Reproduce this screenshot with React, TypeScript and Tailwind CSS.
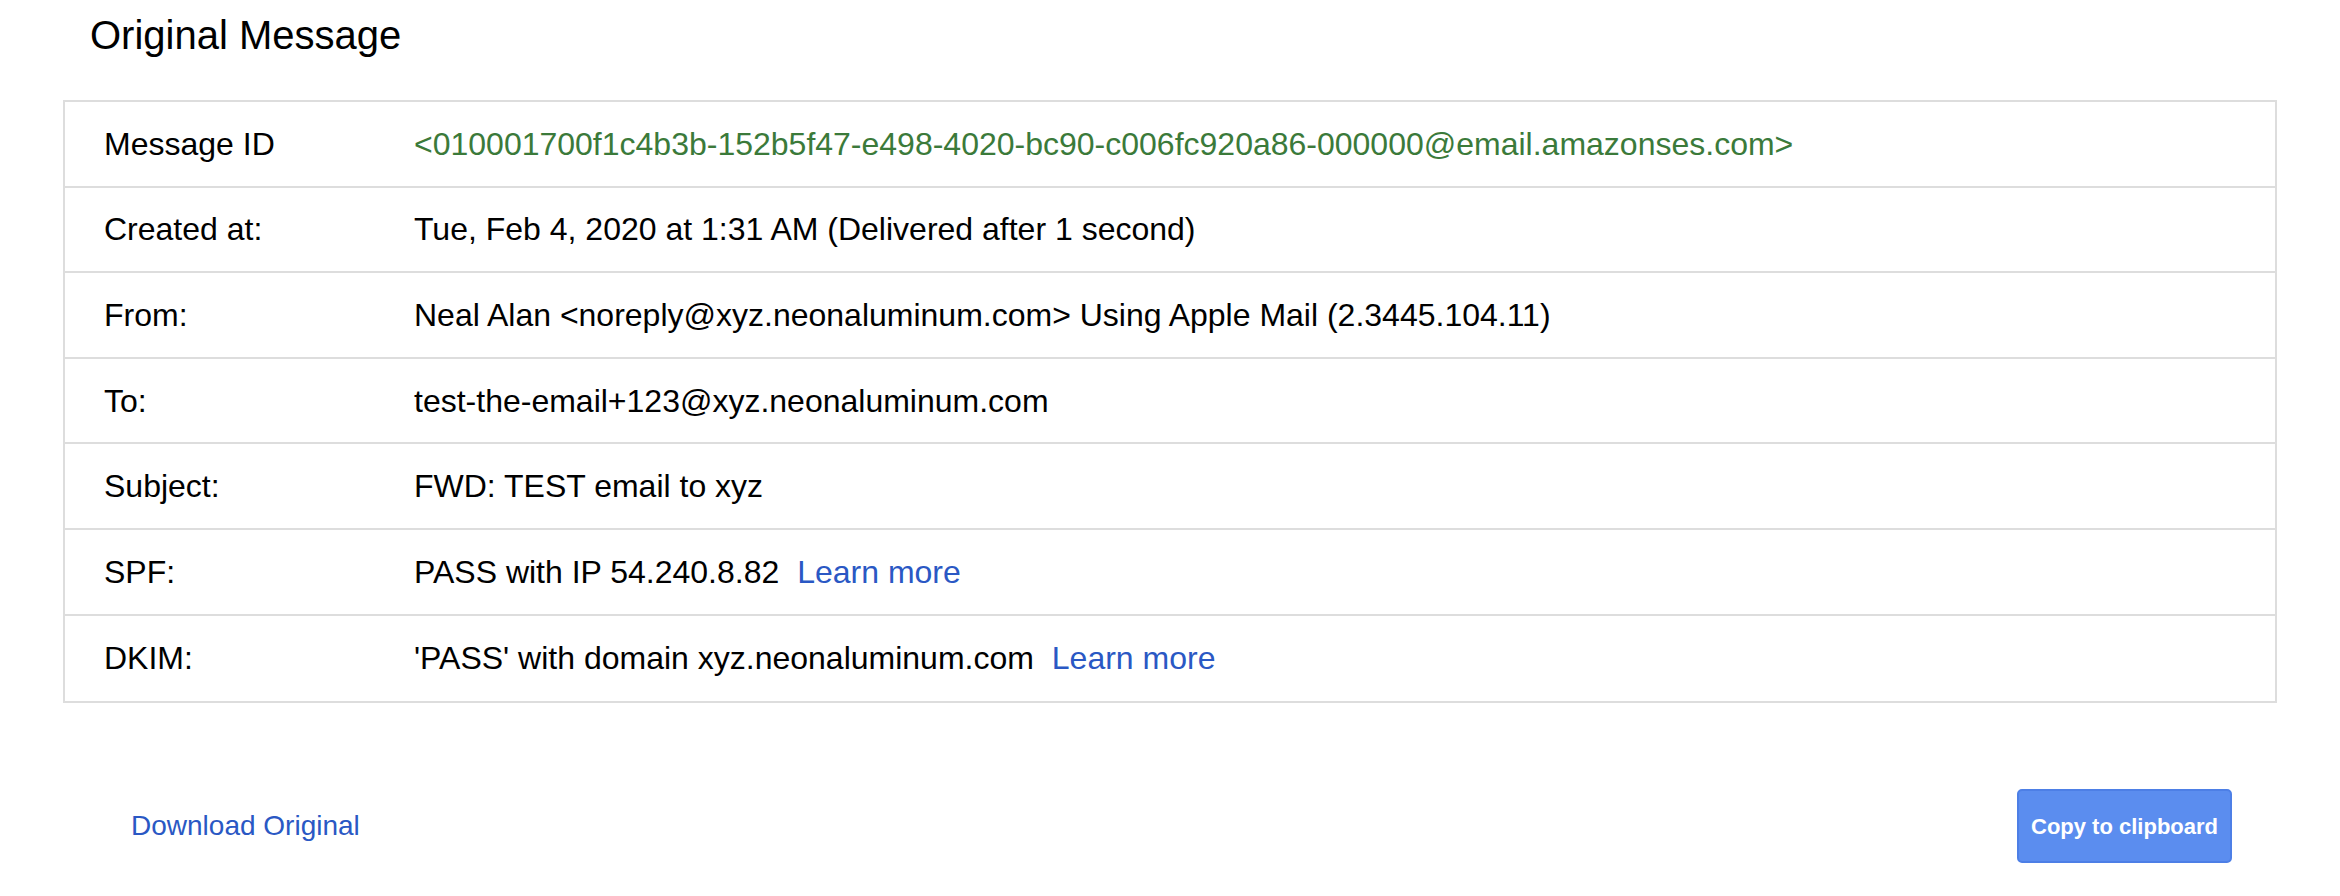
import React from "react";

const font = { fontFamily: '"Liberation Sans", Arial, Helvetica, sans-serif' };

type Row = { label: string; value: React.ReactNode };

const rows: Row[] = [
  {
    label: "Message ID",
    value: (
      <span className="text-[#3b7a3a]">
        {"<010001700f1c4b3b-152b5f47-e498-4020-bc90-c006fc920a86-000000@email.amazonses.com>"}
      </span>
    ),
  },
  { label: "Created at:", value: "Tue, Feb 4, 2020 at 1:31 AM (Delivered after 1 second)" },
  { label: "From:", value: "Neal Alan <noreply@xyz.neonaluminum.com> Using Apple Mail (2.3445.104.11)" },
  { label: "To:", value: "test-the-email+123@xyz.neonaluminum.com" },
  { label: "Subject:", value: "FWD: TEST email to xyz" },
  {
    label: "SPF:",
    value: (
      <>
        PASS with IP 54.240.8.82{" "}
        <a href="#" className="ml-[9px] text-[#2a58c4]">Learn more</a>
      </>
    ),
  },
  {
    label: "DKIM:",
    value: (
      <>
        'PASS' with domain xyz.neonaluminum.com{" "}
        <a href="#" className="ml-[9px] text-[#2a58c4]">Learn more</a>
      </>
    ),
  },
];

export default function App() {
  return (
    <div className="w-[2340px] h-[896px] bg-white text-black" style={font}>
      <h1 className="pl-[90px] pt-[12px] text-[40px] leading-[46px] font-normal">Original Message</h1>

      <div className="mx-[63px] mt-[42px] w-[2214px] border-2 border-[#dddddd]">
        {rows.map((row, i) => (
          <div
            key={i}
            className={`flex items-center h-[85.6px] text-[32px] ${i < rows.length - 1 ? "border-b-2 border-[#dddddd]" : ""}`}
          >
            <div className="w-[349px] pl-[39px] shrink-0">{row.label}</div>
            <div className="whitespace-nowrap">{row.value}</div>
          </div>
        ))}
      </div>

      <div className="flex items-center justify-between mt-[86px] pl-[131px] pr-[108px]">
        <a href="#" className="text-[28px] text-[#2a58c4]">Download Original</a>
        <button className="w-[215px] h-[74px] rounded-[5px] border-2 border-[#4d7fe6] bg-[#5b8def] text-white text-[22px] font-bold">
          Copy to clipboard
        </button>
      </div>
    </div>
  );
}
